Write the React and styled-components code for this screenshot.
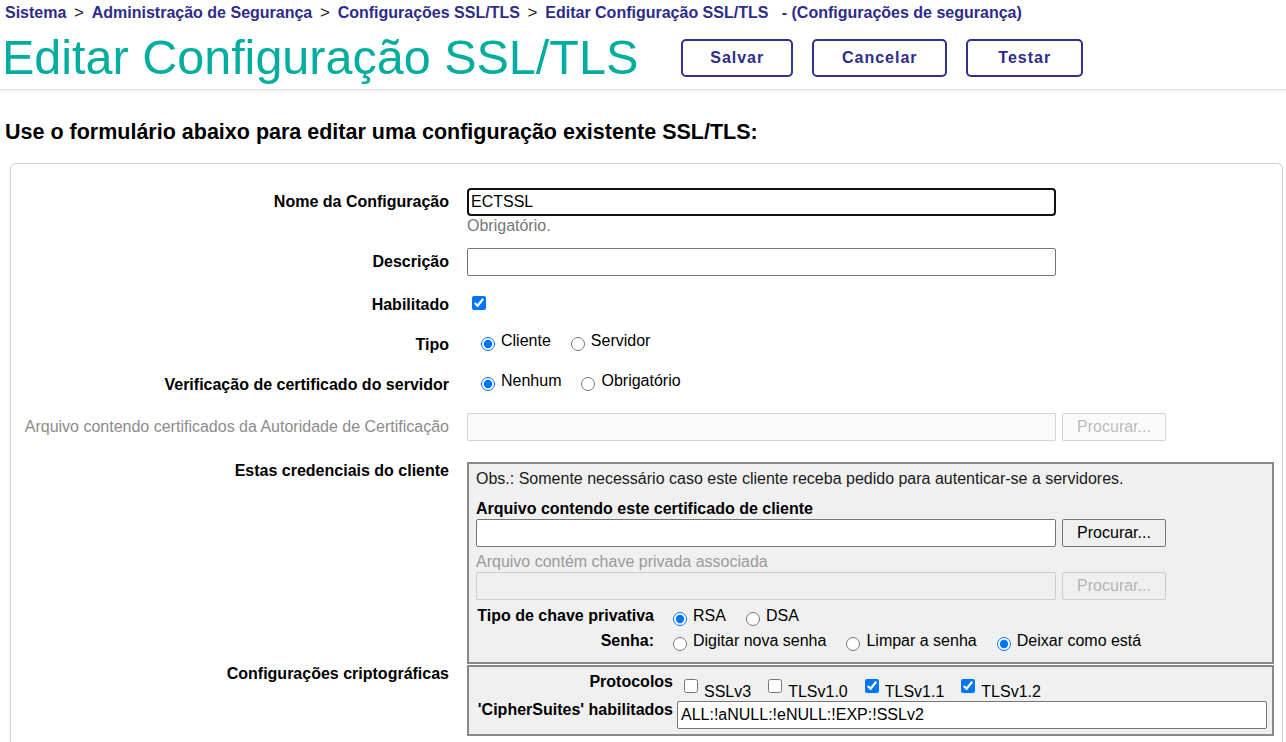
import React from "react"
import styled, { createGlobalStyle } from "styled-components"

const GlobalStyle = createGlobalStyle`
html, body {
margin: 0;
padding: 0;
overflow: hidden;
background: #fff;
}
body {
font-family: "Liberation Sans", Arial, sans-serif;
font-size: 16px;
color: #000;
}
`

const Page = styled.div`
padding-top: 4px;
`

/* header */

const Breadcrumb = styled.div`
padding-left: 5px;
font-size: 16px;
line-height: 18px;
font-weight: bold;
color: #2d2c8a;
white-space: nowrap;
`

const Sep = styled.span`
font-weight: normal;
font-size: 17px;
color: #1a1a1a;
margin: 0 3px;
`

const TitleRow = styled.div`
display: flex;
align-items: center;
padding: 8px 0 4px 2px;
border-bottom: 1px solid #e6e6e6;
box-shadow: 0 2px 0 #f4f4f4;
`

const Title = styled.h1`
margin: 0 43px 0 0;
font-size: 48.5px;
line-height: 55px;
font-weight: normal;
color: #00ad9f;
white-space: nowrap;
`

const Actions = styled.div`
display: flex;
gap: 19px;
`

const ActionButton = styled.button`
width: ${p => p.$w}px;
height: 38px;
background: #fff;
border: 2px solid #303190;
border-radius: 5px;
color: #2d2c8a;
font-family: "Liberation Sans", Arial, sans-serif;
font-size: 16px;
font-weight: bold;
letter-spacing: 1px;
cursor: pointer;
`

const Subtitle = styled.h2`
margin: 29px 0 0 5px;
font-size: 21.5px;
line-height: 26px;
font-weight: bold;
`

/* form */

const Panel = styled.div`
margin: 18px 3px 0 10px;
border: 1px solid #cfcfcf;
border-radius: 6px;
padding: 24px 8px 60px 6px;
`

const FormRow = styled.div`
display: grid;
grid-template-columns: 432px 1fr;
column-gap: 18px;
align-items: ${p => p.$align || "center"};
min-height: 28px;
margin-top: ${p => p.$mt || 0}px;
`

const Label = styled.div`
text-align: right;
font-weight: ${p => (p.$muted ? "normal" : "bold")};
color: ${p => (p.$muted ? "#8c8c8c" : "#000")};
line-height: ${p => p.$lh || 28}px;
white-space: nowrap;
`

const Field = styled.input`
box-sizing: border-box;
width: ${p => (p.$w ? `${p.$w}px` : "100%")};
height: 28px;
margin: 0;
padding: ${p => (p.$focused ? "0 2px" : "1px 3px")};
border: ${p => (p.$focused ? "2px solid #111" : "1px solid #767676")};
border-radius: ${p => (p.$focused ? 4 : 2)}px;
background: #fff;
font-family: "Liberation Sans", Arial, sans-serif;
font-size: 16px;
color: #000;
outline: none;

&:disabled {
background: rgba(239, 239, 239, 0.3);
border-color: rgba(118, 118, 118, 0.3);
}
`

const Hint = styled.div`
margin-top: 1px;
line-height: 18px;
color: #777;
`

const FileRow = styled.div`
display: flex;
gap: 6px;
margin-top: ${p => p.$mt || 0}px;
`

const BrowseButton = styled.button`
box-sizing: border-box;
width: 104px;
height: 28px;
padding: 0;
background: #efefef;
border: 1px solid #767676;
border-radius: 2px;
font-family: "Liberation Sans", Arial, sans-serif;
font-size: 16px;
color: #000;

&:disabled {
background: rgba(239, 239, 239, 0.3);
border-color: rgba(118, 118, 118, 0.3);
color: rgba(16, 16, 16, 0.3);
}
`

const Check = styled.input`
width: 14px;
height: 14px;
margin: 0 0 0 5px;
accent-color: #0075ff;
`

const Options = styled.div`
display: flex;
align-items: flex-start;
padding-left: ${p => p.$pl || 0}px;
`

const Opt = styled.label`
display: inline-flex;
align-items: flex-start;
margin-right: ${p => p.$gap || 20}px;
white-space: nowrap;

input {
width: 14px;
height: 14px;
margin: ${p => p.$boxTop}px 6px 0 0;
accent-color: #0075ff;
flex: none;
}

span {
line-height: 18px;
padding-top: ${p => p.$textTop}px;
}
`

const SubBox = styled.div`
background: #f0f0f0;
border: 2px solid #888;
padding: ${p => p.$pad};
`

const Note = styled.div`
line-height: 18px;
color: #1a1a1a;
`

const BoxLabel = styled.div`
line-height: 18px;
margin-top: ${p => p.$mt || 0}px;
font-weight: ${p => (p.$muted ? "normal" : "bold")};
color: ${p => (p.$muted ? "#9a9a9a" : "#000")};
`

const SubGrid = styled.div`
display: grid;
grid-template-columns: ${p => p.$label}px 1fr;
grid-auto-rows: ${p => p.$rows};
column-gap: ${p => p.$gap}px;
row-gap: ${p => p.$rowGap || 0}px;
margin-top: ${p => p.$mt || 0}px;
`

const SubLabel = styled.div`
text-align: right;
font-weight: bold;
line-height: ${p => p.$lh || 18}px;
white-space: nowrap;
`

const RadioGroup = ({ name, items, checked, pl, boxTop, textTop }) => (
<Options $pl={pl}>
  {items.map(it => (
    <Opt key={it} $boxTop={boxTop} $textTop={textTop}>
      <input type="radio" name={name} defaultChecked={it === checked} />
      <span>{it}</span>
    </Opt>
  ))}
</Options>
)

const protocols = [
  { name: "SSLv3", on: false },
  { name: "TLSv1.0", on: false },
  { name: "TLSv1.1", on: true },
  { name: "TLSv1.2", on: true },
]

const App = () => {
return (
<Page>
  <GlobalStyle />
  <Breadcrumb>
    Sistema<Sep> &gt; </Sep>Administração de Segurança<Sep> &gt; </Sep>Configurações SSL/TLS<Sep> &gt; </Sep>
    Editar Configuração SSL/TLS&nbsp;&nbsp; - (Configurações de segurança)
  </Breadcrumb>

  <TitleRow>
    <Title>Editar Configuração SSL/TLS</Title>
    <Actions>
      <ActionButton $w={112}>Salvar</ActionButton>
      <ActionButton $w={135}>Cancelar</ActionButton>
      <ActionButton $w={117}>Testar</ActionButton>
    </Actions>
  </TitleRow>

  <Subtitle>Use o formulário abaixo para editar uma configuração existente SSL/TLS:</Subtitle>

  <Panel>
    <FormRow $align="start">
      <Label>Nome da Configuração</Label>
      <div>
        <Field $w={589} $focused defaultValue="ECTSSL" />
        <Hint>Obrigatório.</Hint>
      </div>
    </FormRow>

    <FormRow $mt={13}>
      <Label>Descrição</Label>
      <Field $w={589} />
    </FormRow>

    <FormRow $mt={15}>
      <Label>Habilitado</Label>
      <div>
        <Check type="checkbox" defaultChecked />
      </div>
    </FormRow>

    <FormRow $mt={12} $align="start">
      <Label>Tipo</Label>
      <RadioGroup name="tipo" items={["Cliente", "Servidor"]} checked="Cliente" pl={14} boxTop={6} textTop={1} />
    </FormRow>

    <FormRow $mt={12} $align="start">
      <Label>Verificação de certificado do servidor</Label>
      <RadioGroup name="verif" items={["Nenhum", "Obrigatório"]} checked="Nenhum" pl={14} boxTop={6} textTop={1} />
    </FormRow>

    <FormRow $mt={14}>
      <Label $muted>Arquivo contendo certificados da Autoridade de Certificação</Label>
      <FileRow>
        <Field $w={589} disabled />
        <BrowseButton disabled>Procurar...</BrowseButton>
      </FileRow>
    </FormRow>

    <FormRow $mt={21} $align="start">
      <Label $lh={18}>Estas credenciais do cliente</Label>
      <SubBox $pad="6px 5px 9px 7px">
        <Note>Obs.: Somente necessário caso este cliente receba pedido para autenticar-se a servidores.</Note>
        <BoxLabel $mt={12}>Arquivo contendo este certificado de cliente</BoxLabel>
        <FileRow $mt={1}>
          <Field $w={580} />
          <BrowseButton>Procurar...</BrowseButton>
        </FileRow>
        <BoxLabel $mt={6} $muted>Arquivo contém chave privada associada</BoxLabel>
        <FileRow $mt={1}>
          <Field $w={580} disabled />
          <BrowseButton disabled>Procurar...</BrowseButton>
        </FileRow>
        <SubGrid $label={178} $gap={19} $rows="24px" $rowGap={1} $mt={4}>
          <SubLabel $lh={24}>Tipo de chave privativa</SubLabel>
          <RadioGroup name="chave" items={["RSA", "DSA"]} checked="RSA" boxTop={8} textTop={3} />
          <SubLabel $lh={24}>Senha:</SubLabel>
          <RadioGroup
            name="senha"
            items={["Digitar nova senha", "Limpar a senha", "Deixar como está"]}
            checked="Deixar como está"
            boxTop={8}
            textTop={3}
          />
        </SubGrid>
      </SubBox>
    </FormRow>

    <FormRow $mt={1} $align="start">
      <Label $lh={18}>Configurações criptográficas</Label>
      <SubBox $pad="6px 5px 5px 7px">
        <SubGrid $label={197} $gap={4} $rows="auto">
          <SubLabel style={{ height: 25 }}>Protocolos</SubLabel>
          <Options $pl={7}>
            {protocols.map(p => (
              <Opt key={p.name} $gap={17} $boxTop={6} $textTop={10}>
                <input type="checkbox" defaultChecked={p.on} />
                <span>{p.name}</span>
              </Opt>
            ))}
          </Options>
          <SubLabel>'CipherSuites' habilitados</SubLabel>
          <Field defaultValue="ALL:!aNULL:!eNULL:!EXP:!SSLv2" />
        </SubGrid>
      </SubBox>
    </FormRow>
  </Panel>
</Page>
)
}

export default App
